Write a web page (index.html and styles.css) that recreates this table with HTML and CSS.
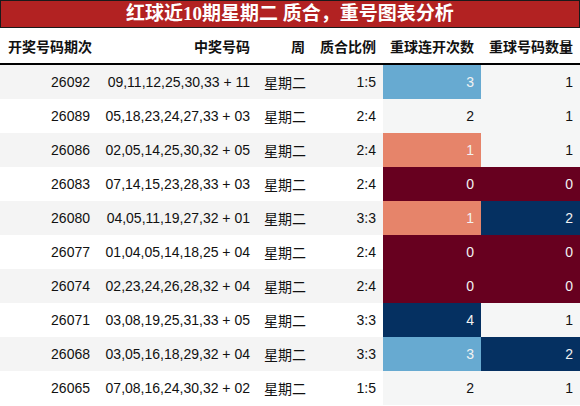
FILE: index.html
```html
<!DOCTYPE html>
<html lang="zh">
<head>
<meta charset="utf-8">
<link rel="stylesheet" href="styles.css">
</head>
<body>
<div class="page">
  <div class="title">红球近10期星期二 质合，重号图表分析</div>
  <table class="grid">
    <colgroup>
      <col class="c1"><col class="c2"><col class="c3"><col class="c4"><col class="c5"><col class="c6">
    </colgroup>
    <thead>
      <tr>
        <th class="first">开奖号码期次</th>
        <th>中奖号码</th>
        <th>周</th>
        <th>质合比例</th>
        <th>重球连开次数</th>
        <th>重球号码数量</th>
      </tr>
    </thead>
    <tbody>
      <tr class="odd"><td>26092</td><td>09,11,12,25,30,33 + 11</td><td>星期二</td><td>1:5</td><td class="lb">3</td><td class="nt">1</td></tr>
      <tr><td>26089</td><td>05,18,23,24,27,33 + 03</td><td>星期二</td><td>2:4</td><td class="nt">2</td><td class="nt">1</td></tr>
      <tr class="odd"><td>26086</td><td>02,05,14,25,30,32 + 05</td><td>星期二</td><td>2:4</td><td class="sa">1</td><td class="nt">1</td></tr>
      <tr><td>26083</td><td>07,14,15,23,28,33 + 03</td><td>星期二</td><td>2:4</td><td class="dr">0</td><td class="dr">0</td></tr>
      <tr class="odd"><td>26080</td><td>04,05,11,19,27,32 + 01</td><td>星期二</td><td>3:3</td><td class="sa">1</td><td class="db">2</td></tr>
      <tr><td>26077</td><td>01,04,05,14,18,25 + 04</td><td>星期二</td><td>2:4</td><td class="dr">0</td><td class="dr">0</td></tr>
      <tr class="odd"><td>26074</td><td>02,23,24,26,28,32 + 04</td><td>星期二</td><td>2:4</td><td class="dr">0</td><td class="dr">0</td></tr>
      <tr><td>26071</td><td>03,08,19,25,31,33 + 05</td><td>星期二</td><td>3:3</td><td class="db">4</td><td class="nt">1</td></tr>
      <tr class="odd"><td>26068</td><td>03,05,16,18,29,32 + 04</td><td>星期二</td><td>3:3</td><td class="lb">3</td><td class="db">2</td></tr>
      <tr><td>26065</td><td>07,08,16,24,30,32 + 02</td><td>星期二</td><td>1:5</td><td class="nt">2</td><td class="nt">1</td></tr>
    </tbody>
  </table>
</div>
</body>
</html>
```

FILE: styles.css
```css
html, body {
  margin: 0;
  padding: 0;
  background: #ffffff;
}

.page {
  width: 580px;
  font-family: "Liberation Sans", "Noto Sans CJK SC", sans-serif;
  color: #111111;
}

.title {
  box-sizing: border-box;
  height: 28px;
  border: 1px solid #1a1a1a;
  background: #b22222;
  color: #ffffff;
  font-family: "Liberation Serif", "Noto Sans CJK SC", serif;
  font-weight: bold;
  font-size: 19px;
  line-height: 25px;
  text-align: center;
}

.grid {
  width: 580px;
  border-collapse: collapse;
  table-layout: fixed;
  font-size: 14px;
}

.c1 { width: 97px; }
.c2 { width: 160px; }
.c3 { width: 55px; }
.c4 { width: 71px; }
.c5 { width: 98px; }
.c6 { width: 99px; }

.grid th {
  height: 35px;
  padding: 0 7px;
  text-align: right;
  font-weight: bold;
  font-size: 14px;
  border-bottom: 2px solid #000000;
  background: #ffffff;
  white-space: nowrap;
}

.grid th.first {
  text-align: left;
  padding-left: 8px;
}

.grid td {
  height: 34px;
  padding: 0 7px;
  text-align: right;
  white-space: nowrap;
  background: #ffffff;
}

.grid tr.odd td {
  background: #f4f4f4;
}

.grid tr td.nt { background: #f5f6f6; color: #111111; }
.grid tr td.lb { background: #67aad1; color: #f2f2f2; }
.grid tr td.sa { background: #e6846a; color: #f2f2f2; }
.grid tr td.dr { background: #67001f; color: #f2f2f2; }
.grid tr td.db { background: #053061; color: #f2f2f2; }
```
